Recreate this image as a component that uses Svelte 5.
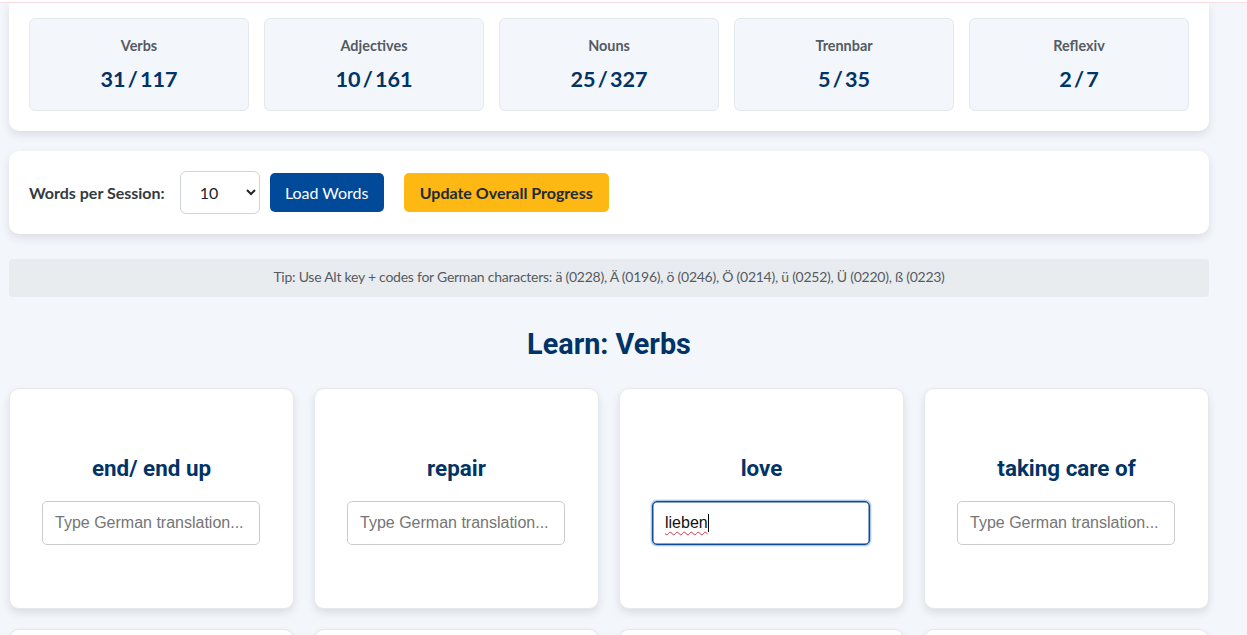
<script>
  const stats = [
    { label: 'Verbs', value: '31 / 117' },
    { label: 'Adjectives', value: '10 / 161' },
    { label: 'Nouns', value: '25 / 327' },
    { label: 'Trennbar', value: '5 / 35' },
    { label: 'Reflexiv', value: '2 / 7' }
  ];
  const words = [
    { en: 'end/ end up', v: '' },
    { en: 'repair', v: '' },
    { en: 'love', v: 'lieben', active: true },
    { en: 'taking care of', v: '' },
    { en: '', v: '' },
    { en: '', v: '' },
    { en: '', v: '' },
    { en: '', v: '' }
  ];
</script>

<div class="page">
  <div class="topline"></div>
  <main class="wrap">
    <section class="panel stats">
      {#each stats as s}
        <div class="stat">
          <div class="label">{s.label}</div>
          <div class="value">{s.value}</div>
        </div>
      {/each}
    </section>

    <section class="panel controls">
      <label class="wps" for="wps">Words per Session:</label>
      <select id="wps" class="sel"><option>10</option><option>20</option></select>
      <button class="btn load">Load Words</button>
      <button class="btn update">Update Overall Progress</button>
    </section>

    <div class="tip">Tip: Use Alt key + codes for German characters: ä (0228), Ä (0196), ö (0246), Ö (0214), ü (0252), Ü (0220), ß (0223)</div>

    <h2 class="title">Learn: Verbs</h2>

    <div class="grid">
      {#each words as w}
        <div class="card">
          <h3>{w.en}</h3>
          {#if w.active}
            <div class="input focus"><span class="typed">{w.v}</span><span class="caret"></span></div>
          {:else}
            <input class="input" type="text" placeholder="Type German translation..." />
          {/if}
        </div>
      {/each}
    </div>
  </main>
</div>

<style>
  :global(html), :global(body) { margin: 0; height: 100%; overflow: hidden; background: #f3f6fa; }
  .page { height: 635px; overflow: hidden; background: #f3f6fa; font-family: Lato, sans-serif; }
  .topline { height: 2px; background: #fff; border-bottom: 1px solid #f8dfe3; }
  .wrap { width: 1200px; margin-left: 9px; }
  .panel { background: #fff; border-radius: 0 0 10px 10px; box-shadow: 0 4px 10px rgba(0,0,0,0.1); }
  .stats { display: flex; gap: 15px; padding: 15px 20px 20px; }
  .stat { width: 220px; height: 93px; box-sizing: border-box; background: #f3f6fa; border: 1px solid #e4e9ee; border-radius: 6px; text-align: center; padding-top: 18px; }
  .label { font-size: 14.4px; font-weight: 700; color: #555b63; line-height: 17px; }
  .value { font-size: 21.6px; font-weight: 700; color: #003366; line-height: 26px; margin-top: 12px; word-spacing: -3px; }
  .controls { margin-top: 20px; height: 83px; box-sizing: border-box; border-radius: 10px; padding: 0 20px; display: flex; align-items: center; }
  .wps { font-size: 16px; font-weight: 700; color: #343a40; margin-right: 15px; }
  .sel { width: 80px; height: 43px; box-sizing: border-box; border: 1px solid #ced4da; border-radius: 6px; background: #fff; font-family: Lato, sans-serif; font-size: 16px; color: #212529; padding: 0 15px; margin-right: 10px; }
  .btn { height: 39px; border: 0; border-radius: 5px; font-family: Lato, sans-serif; font-size: 16px; padding: 0 15px; }
  .load { width: 114px; background: #004a99; color: #fff; margin-right: 20px; }
  .update { width: 205px; background: #fdb813; color: #212b36; font-weight: 700; }
  .tip { margin-top: 25px; height: 38px; line-height: 36px; background: #e9ecef; border-radius: 4px; text-align: center; font-size: 14px; letter-spacing: -0.25px; color: #555b63; }
  .title { font-family: Roboto, sans-serif; font-size: 28.8px; font-weight: 700; color: #003366; text-align: center; margin: 30px 0 0; line-height: 34px; height: 61px; }
  .grid { display: grid; grid-template-columns: repeat(4, 285px); gap: 20px; }
  .card { height: 221px; box-sizing: border-box; background: #fff; border: 1px solid #e4e9ee; border-radius: 10px; box-shadow: 0 4px 8px rgba(0,0,0,0.1); display: flex; flex-direction: column; align-items: center; padding-top: 66px; }
  .card h3 { margin: 0 0 20px; font-family: Roboto, sans-serif; font-size: 22.4px; font-weight: 700; color: #003366; line-height: 26px; min-height: 26px; }
  .input { width: 218px; height: 44px; margin-right: 1px; box-sizing: border-box; border: 1px solid #ccc; border-radius: 5px; padding: 0 12px; font-family: "Liberation Sans", Arial, sans-serif; font-size: 16px; color: #111; background: #fff; outline: none; }
  .input::placeholder { color: #757575; opacity: 1; }
  .focus { display: flex; align-items: center; border: 1px solid #0f4a94; box-shadow: inset 0 0 0 0.5px #0f4a94, 0 0 0 1px #a9c6e8, 0 0 0 2px #e3eef9; }
  .typed { text-decoration: underline wavy #d6344a 1px; text-underline-offset: 3px; }
  .caret { display: inline-block; width: 1px; height: 18px; background: #000; }
</style>
